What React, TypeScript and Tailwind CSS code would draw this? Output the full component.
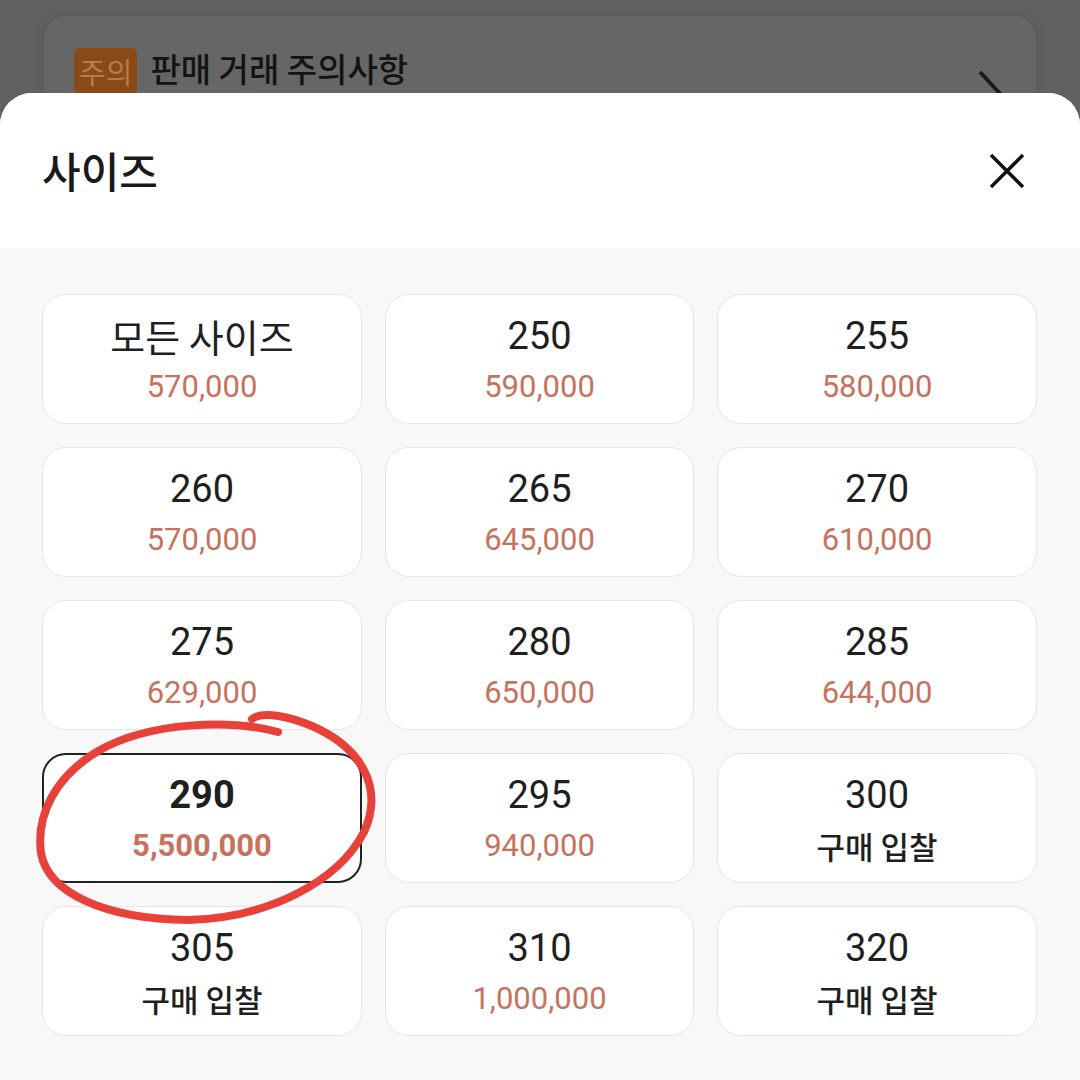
import React from 'react'

// ── Data ─────────────────────────────────────────────────────────────────────

interface SizeOption {
  label: string
  price: string | null
  selected?: boolean
  korean?: boolean
}

const SIZES: SizeOption[] = [
  { label: '모든 사이즈', price: '570,000', korean: true },
  { label: '250', price: '590,000' },
  { label: '255', price: '580,000' },
  { label: '260', price: '570,000' },
  { label: '265', price: '645,000' },
  { label: '270', price: '610,000' },
  { label: '275', price: '629,000' },
  { label: '280', price: '650,000' },
  { label: '285', price: '644,000' },
  { label: '290', price: '5,500,000', selected: true },
  { label: '295', price: '940,000' },
  { label: '300', price: null },
  { label: '305', price: null },
  { label: '310', price: '1,000,000' },
  { label: '320', price: null },
]

const FONT = "font-['Roboto','Noto_Sans_CJK_KR',sans-serif]"

// ── Page ─────────────────────────────────────────────────────────────────────

export default function App() {
  return (
    <div className={`relative h-[1080px] w-[1080px] overflow-hidden bg-[#616161] ${FONT}`}>
      {/* dimmed page behind the sheet */}
      <div className="mx-[44px] mt-[16px] h-[200px] rounded-[22px] bg-[#666666] shadow-[0_0_10px_rgba(0,0,0,0.12)]">
        <div className="flex items-start pl-[30px] pt-[32px]">
          <span className="flex h-[46px] items-center rounded-[6px] bg-[#8a4a17] px-[5px] font-['Noto_Sans_CJK_KR',sans-serif] text-[29px] leading-none text-[#b9794a]">
            주의
          </span>
          <span className="ml-[13px] font-['Noto_Sans_CJK_KR',sans-serif] text-[33px] font-medium leading-[40px] text-[#141414]">
            판매 거래 주의사항
          </span>
          <svg className="ml-auto mr-[28px] mt-[22px]" width="32" height="50" viewBox="0 0 32 50">
            <path d="M4 2 L28 28 L4 54" fill="none" stroke="#1c1c1c" strokeWidth="4" />
          </svg>
        </div>
      </div>

      {/* bottom sheet */}
      <div className="absolute inset-x-0 bottom-0 top-[93px] overflow-hidden rounded-t-[32px] bg-[#f8f8f8]">
        <div className="flex h-[155px] items-center justify-between bg-white pl-[42px] pr-[55px]">
          <h2 className="pb-[2px] font-['Noto_Sans_CJK_KR',sans-serif] text-[42px] font-medium text-[#1a1a1a]">
            사이즈
          </h2>
          <svg width="36" height="36" viewBox="0 0 36 36">
            <path d="M2 2 L34 34 M34 2 L2 34" stroke="#111" strokeWidth="3.4" />
          </svg>
        </div>

        <div className="relative grid grid-cols-[320px_309px_320px] gap-[23px] pl-[42px] pt-[46px]">
          {SIZES.map((s) => (
            <SizeCard key={s.label} option={s} />
          ))}

          {/* hand-drawn red circle around 290 */}
          <svg
            className="pointer-events-none absolute left-0 top-0"
            width="420"
            height="700"
            viewBox="0 248 420 700"
          >
            <path
              d="M278 732 C 230 719, 150 722, 100 750 C 55 776, 36 815, 41 853 C 48 893, 105 919, 188 920 C 268 918, 338 882, 364 832 C 384 788, 362 748, 312 726 C 288 716, 262 711, 252 719"
              fill="none"
              stroke="#e8413a"
              strokeWidth="8"
              strokeLinecap="round"
              strokeLinejoin="round"
            />
          </svg>
        </div>
      </div>
    </div>
  )
}

// ── Card ─────────────────────────────────────────────────────────────────────

function SizeCard({ option }: { option: SizeOption }) {
  const { label, price, selected, korean } = option
  return (
    <div
      className={`flex h-[130px] flex-col items-center rounded-[24px] bg-white ${
        selected ? 'border-2 border-[#222222] pt-[18px]' : 'border border-[#e6e6e6] pt-[19px]'
      }`}
    >
      <p
        className={`leading-[44px] text-[#1f1f1f] ${
          korean ? "font-['Noto_Sans_CJK_KR',sans-serif] text-[38px]" : 'text-[38px]'
        } ${selected ? 'font-bold' : ''}`}
      >
        {label}
      </p>
      {price ? (
        <p
          className={`mt-[7px] text-[31px] leading-[44px] text-[#c5735e] ${selected ? 'font-bold' : ''}`}
        >
          {price}
        </p>
      ) : (
        <p className="mt-[7px] font-['Noto_Sans_CJK_KR',sans-serif] text-[31px] font-medium leading-[44px] text-[#1f1f1f]">
          구매 입찰
        </p>
      )}
    </div>
  )
}
